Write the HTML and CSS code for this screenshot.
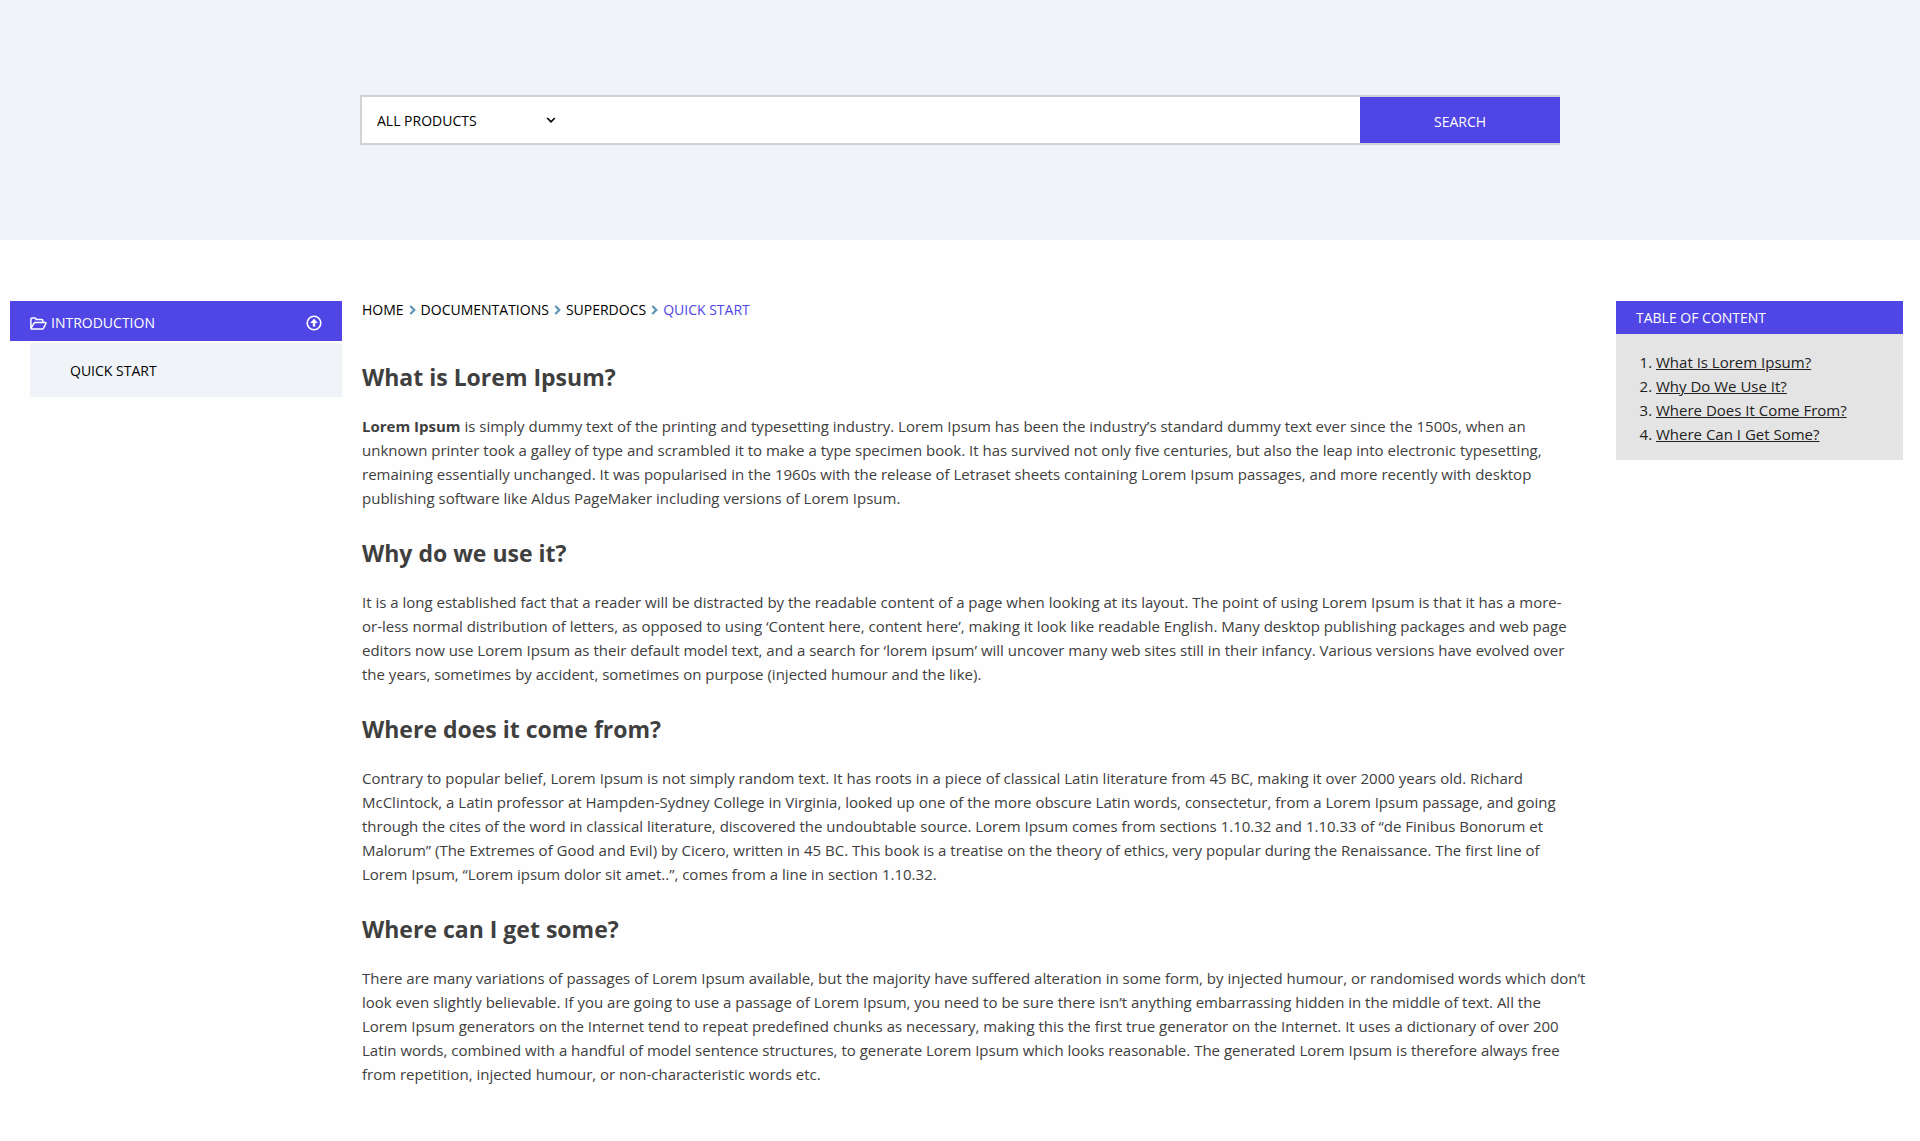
FILE: index.html
```html
<!DOCTYPE html>
<html lang="en">
<head>
<meta charset="utf-8">
<meta name="viewport" content="width=device-width, initial-scale=1">
<title>Quick Start</title>
<link rel="stylesheet" href="styles.css">
</head>
<body>
<header class="hero">
  <form class="search" role="search">
    <div class="picker">
      <select class="picker-select" aria-label="Product">
        <option>ALL PRODUCTS</option>
        <option>SUPERDOCS</option>
      </select>
      <svg class="picker-arrow" viewBox="0 0 10 8" aria-hidden="true"><path d="M1.2 2 5 5.8 8.8 2"/></svg>
    </div>
    <input class="search-input" type="search" aria-label="Search documentation">
    <button class="search-button" type="submit">SEARCH</button>
  </form>
</header>
<div class="layout">
  <nav class="sidebar" aria-label="Documentation">
    <button class="section-toggle" type="button" aria-expanded="true">
      <svg class="icon-folder" viewBox="0 0 17 13" aria-hidden="true"><path d="M.9 11V2q0-1.1 1.1-1.1h3q1 0 1 1v.6h5.8q1 0 1 1V5.6M1.1 11.2 3.9 6.3q.4-.7 1.2-.7h10.3q1 0 .5.9l-2.4 4.6q-.5.9-1.4.9H1.7q-1 0-.6-.8z"/></svg>
      <span>INTRODUCTION</span>
      <svg class="icon-up" viewBox="0 0 16 16" aria-hidden="true"><circle cx="8" cy="8" r="6.8"/><path d="M8 3.8 11.8 8H9.2v3.6H6.8V8H4.2z"/></svg>
    </button>
    <ul class="section-list">
      <li><a class="section-link" href="#quick-start">QUICK START</a></li>
    </ul>
  </nav>
  <main class="article" id="quick-start">
    <nav class="breadcrumb" aria-label="Breadcrumb">
      <a href="#home">HOME</a>
      <svg viewBox="0 0 7 10" aria-hidden="true"><path d="M1.3 1 5.3 5 1.3 9"/></svg>
      <a href="#docs">DOCUMENTATIONS</a>
      <svg viewBox="0 0 7 10" aria-hidden="true"><path d="M1.3 1 5.3 5 1.3 9"/></svg>
      <a href="#superdocs">SUPERDOCS</a>
      <svg viewBox="0 0 7 10" aria-hidden="true"><path d="M1.3 1 5.3 5 1.3 9"/></svg>
      <span class="current" aria-current="page">QUICK START</span>
    </nav>
    <h2 id="what">What is Lorem Ipsum?</h2>
    <p><strong>Lorem Ipsum</strong> is simply dummy text of the printing and typesetting industry. Lorem Ipsum has been the industry’s standard dummy text ever since the 1500s, when an unknown printer took a galley of type and scrambled it to make a type specimen book. It has survived not only five centuries, but also the leap into electronic typesetting, remaining essentially unchanged. It was popularised in the 1960s with the release of Letraset sheets containing Lorem Ipsum passages, and more recently with desktop publishing software like Aldus PageMaker including versions of Lorem Ipsum.</p>
    <h2 id="why">Why do we use it?</h2>
    <p>It is a long established fact that a reader will be distracted by the readable content of a page when looking at its layout. The point of using Lorem Ipsum is that it has a more-<span class="keep">or-less</span> normal distribution of letters, as opposed to using ‘Content here, content here’, making it look like readable English. Many desktop publishing packages and web page editors now use Lorem Ipsum as their default model text, and a search for ‘lorem ipsum’ will uncover many web sites still in their infancy. Various versions have evolved over the years, sometimes by accident, sometimes on purpose (injected humour and the like).</p>
    <h2 id="where-from">Where does it come from?</h2>
    <p>Contrary to popular belief, Lorem Ipsum is not simply random text. It has roots in a piece of classical Latin literature from 45 BC, making it over 2000 years old. Richard McClintock, a Latin professor at Hampden-Sydney College in Virginia, looked up one of the more obscure Latin words, consectetur, from a Lorem Ipsum passage, and going through the cites of the word in classical literature, discovered the undoubtable source. Lorem Ipsum comes from sections 1.10.32 and 1.10.33 of “de Finibus Bonorum et Malorum” (The Extremes of Good and Evil) by Cicero, written in 45 BC. This book is a treatise on the theory of ethics, very popular during the Renaissance. The first line of Lorem Ipsum, “Lorem ipsum dolor sit amet..”, comes from a line in section 1.10.32.</p>
    <h2 id="where-get">Where can I get some?</h2>
    <p>There are many variations of passages of Lorem Ipsum available, but the majority have suffered alteration in some form, by injected humour, or randomised words which don’t look even slightly believable. If you are going to use a passage of Lorem Ipsum, you need to be sure there isn’t anything embarrassing hidden in the middle of text. All the Lorem Ipsum generators on the Internet tend to repeat predefined chunks as necessary, making this the first true generator on the Internet. It uses a dictionary of over 200 Latin words, combined with a handful of model sentence structures, to generate Lorem Ipsum which looks reasonable. The generated Lorem Ipsum is therefore always free from repetition, injected humour, or non-characteristic words etc.</p>
  </main>
  <aside class="toc">
    <h3 class="toc-title">TABLE OF CONTENT</h3>
    <ol class="toc-list">
      <li><a href="#what">What Is Lorem Ipsum?</a></li>
      <li><a href="#why">Why Do We Use It?</a></li>
      <li><a href="#where-from">Where Does It Come From?</a></li>
      <li><a href="#where-get">Where Can I Get Some?</a></li>
    </ol>
  </aside>
</div>
</body>
</html>
```
FILE: styles.css
```css
* { box-sizing: border-box; }
body {
  margin: 0;
  background: #fefefe;
  color: #3f3f3f;
  font: 15px/24px "Segoe UI", "Open Sans", "Noto Sans", sans-serif;
}
a { color: inherit; text-decoration: none; }
svg { flex: none; fill: none; stroke: currentColor; }

.hero {
  padding: 95px 20px;
  background: #f0f4f8;
}
.search {
  display: flex;
  max-width: 1200px;
  height: 50px;
  margin: 0 auto;
  border: 2px solid #cfd3d6;
  border-right: 0;
  background: #fff;
}
.picker {
  display: flex;
  align-items: center;
  width: 208px;
  padding-right: 14px;
}
.picker-select {
  flex: 1;
  height: 46px;
  padding: 2px 0 0 15px;
  border: 0;
  appearance: none;
  background: transparent;
  color: #000;
  font: inherit;
  font-size: 14px;
}
.picker-arrow { width: 10px; height: 8px; color: #000; stroke-width: 1.6; }
.search-input {
  flex: 1;
  min-width: 0;
  border: 0;
  background: transparent;
  font: inherit;
  outline: 0;
}
.search-button {
  width: 200px;
  padding: 4px 0 0;
  border: 0;
  background: #5046e5;
  color: #fff;
  font: inherit;
  font-size: 14px;
}

.layout {
  display: grid;
  grid-template-columns: 332px minmax(0, 1fr) 287px;
  gap: 20px;
  align-items: start;
  padding: 61px 17px 54px 10px;
}
.section-toggle {
  display: flex;
  align-items: center;
  gap: 4px;
  width: 100%;
  height: 40px;
  padding: 4px 20px 0;
  border: 0;
  background: #5046e5;
  color: #fff;
  font: inherit;
  font-size: 14px;
}
.icon-folder { width: 17px; height: 13px; stroke-width: 1.5; }
.icon-up { width: 16px; height: 16px; margin-left: auto; stroke-width: 1.6; }
.icon-up path { fill: currentColor; stroke: none; }
.section-list {
  margin: 2px 0 0 20px;
  padding: 15px 40px 14px;
  background: #f0f4f8;
  list-style: none;
}
.section-link { color: #000; font-size: 14px; }

.article { padding-right: 9px; }
.breadcrumb {
  display: flex;
  align-items: center;
  gap: 5px;
  height: 18px;
  color: #000;
  font-size: 14px;
}
.breadcrumb svg { width: 7px; height: 10px; color: #5b93b5; stroke-width: 2.2; }
.current { color: #5046e5; }
h2 {
  margin: 25px 0 19px;
  font-size: 23px;
  line-height: 36px;
}
.breadcrumb + h2 { margin-top: 40px; }
p { margin: 0; }
.keep { white-space: nowrap; }

.toc { background: #e4e4e4; }
.toc-title {
  margin: 0;
  padding: 5px 20px 4px;
  background: #5046e5;
  color: #fff;
  font-size: 14px;
  font-weight: 400;
}
.toc-list {
  margin: 0;
  padding: 16px 20px 14px 40px;
  color: #222;
}
.toc-list a { text-decoration: underline; }
```
